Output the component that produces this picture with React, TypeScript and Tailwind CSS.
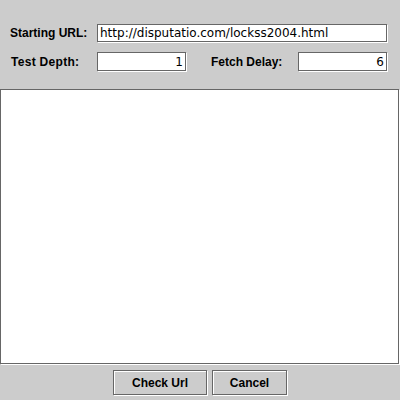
import React from "react";

const labelCls = "font-['Liberation_Sans',Arial,sans-serif] font-bold text-[12px] text-black leading-none";
const fieldCls =
  "bg-white border border-[#666666] shadow-[1px_1px_0_#ffffff] flex items-center px-[2px] font-['DejaVu_Sans',sans-serif] text-[12px] text-black leading-none";
const buttonCls =
  "h-[25px] bg-[#cccccc] border border-[#666666] shadow-[inset_1px_1px_0_#ffffff,1px_1px_0_#ffffff] flex items-center justify-center font-['Liberation_Sans',Arial,sans-serif] font-bold text-[12px] text-black";

export default function App() {
  return (
    <div className="w-[400px] h-[400px] bg-[#cccccc] flex flex-col overflow-hidden">
      {/* URL row */}
      <div className="mt-[24px] flex items-center h-[18px]">
        <span className={`${labelCls} w-[97px] pl-[10px]`}>Starting URL:</span>
        <div className={`${fieldCls} w-[290px] h-[18px]`}>http://disputatio.com/lockss2004.html</div>
      </div>

      {/* depth / delay row */}
      <div className="mt-[10px] flex items-center h-[19px]">
        <span className={`${labelCls} w-[97px] pl-[11px] tracking-[0.3px]`}>Test Depth:</span>
        <div className={`${fieldCls} w-[89px] h-[19px] justify-end`}>1</div>
        <span className={`${labelCls} w-[87px] ml-[25px]`}>Fetch Delay:</span>
        <div className={`${fieldCls} w-[89px] h-[19px] justify-end`}>6</div>
      </div>

      {/* results area */}
      <div className="mt-[18px] w-[399px] h-[275px] bg-white border border-[#666666] shadow-[1px_1px_0_#ffffff]" />

      {/* buttons */}
      <div className="mt-[6px] flex justify-center gap-[5px]">
        <button className={`${buttonCls} w-[94px]`}>Check Url</button>
        <button className={`${buttonCls} w-[75px]`}>Cancel</button>
      </div>
    </div>
  );
}
